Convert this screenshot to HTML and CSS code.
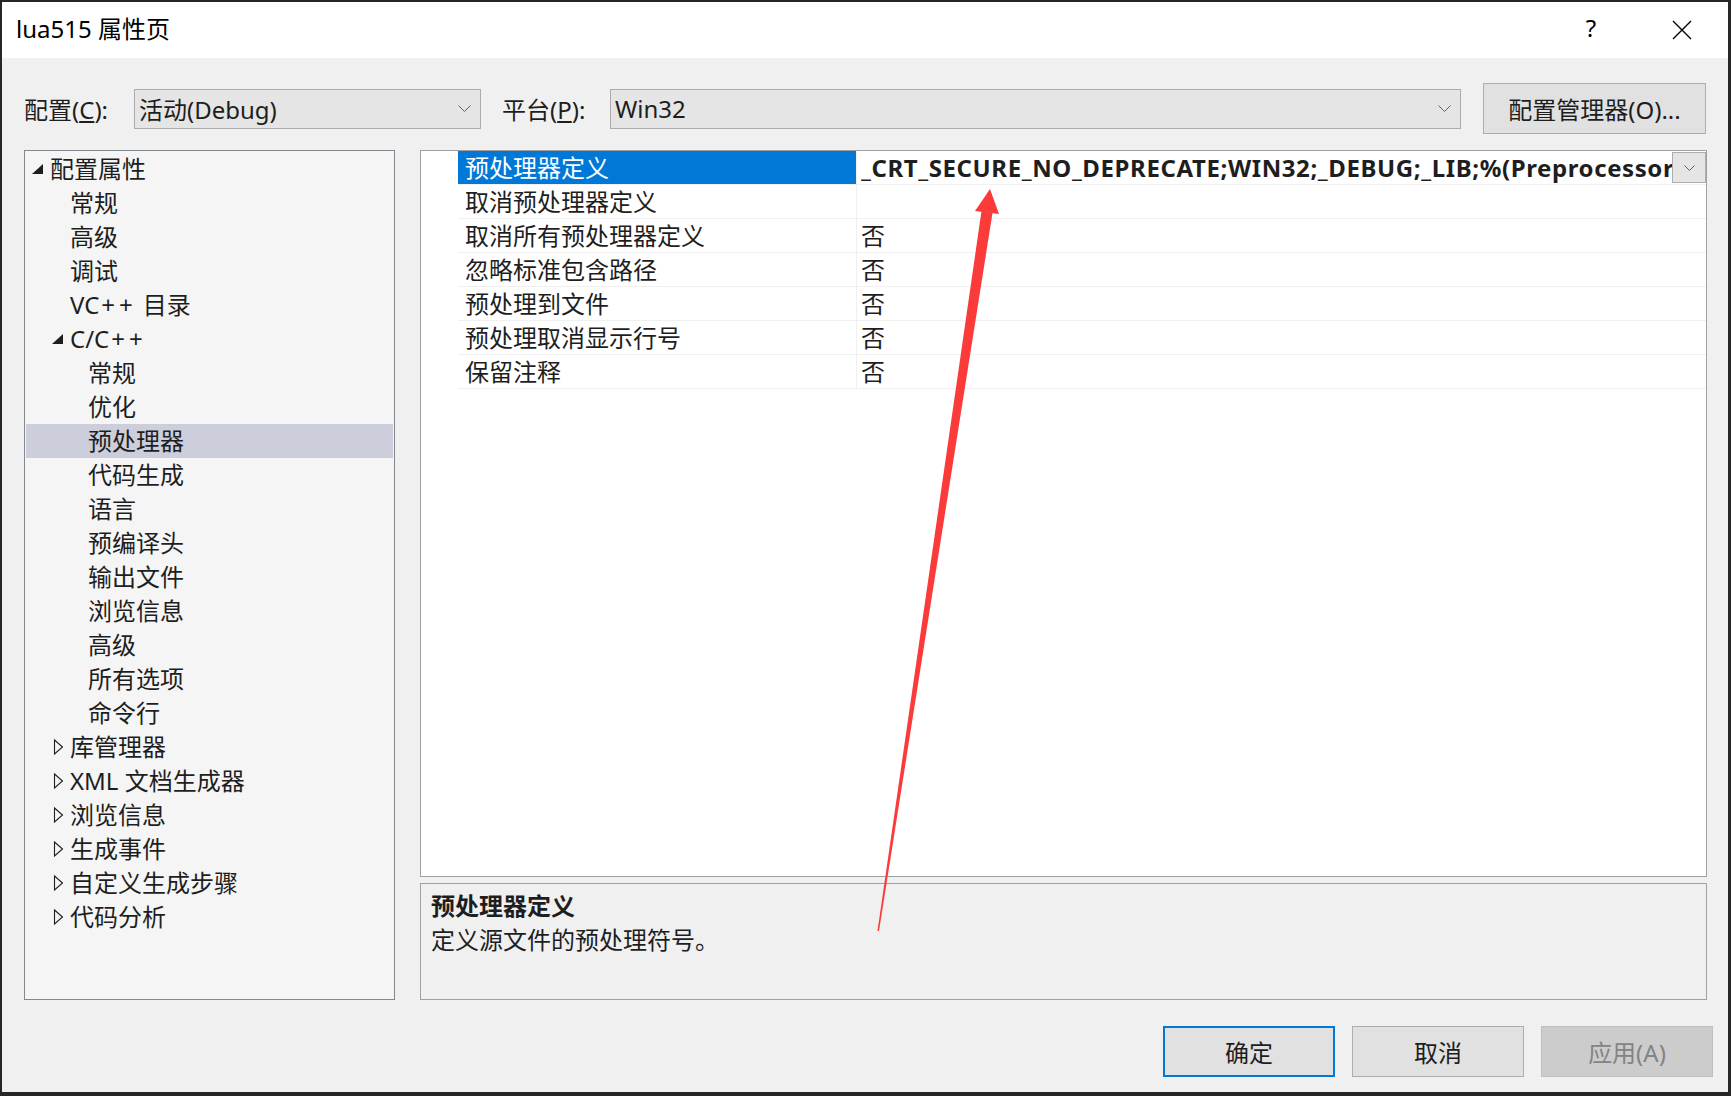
FILE: index.html
```html
<!DOCTYPE html>
<html lang="zh-CN">
<head>
    <meta charset="UTF-8">
    <title>lua515 属性页</title>
    <link rel="stylesheet" href="styles.css">
</head>
<body>
    <div class="window">
        <div class="titlebar">
            <span class="title">lua515 属性页</span>
            <span class="help">?</span>
            <span class="close">
                <svg width="20" height="20" viewBox="0 0 20 20"><path d="M1 1 L19 19 M19 1 L1 19" stroke="#000" stroke-width="1.4" fill="none"/></svg>
            </span>
        </div>

        <div class="toolbar">
            <span class="label label-config">配置(<u>C</u>):</span>
            <div class="combo combo-config">
                <span>活动(Debug)</span>
                <svg width="13" height="7" viewBox="0 0 13 7"><path d="M0.5 0.5 L6.5 6.5 L12.5 0.5" fill="none" stroke="#606060"/></svg>
            </div>
            <span class="label label-platform">平台(<u>P</u>):</span>
            <div class="combo combo-platform">
                <span>Win32</span>
                <svg width="13" height="7" viewBox="0 0 13 7"><path d="M0.5 0.5 L6.5 6.5 L12.5 0.5" fill="none" stroke="#606060"/></svg>
            </div>
            <button class="btn btn-manager">配置管理器(O)...</button>
        </div>

        <div class="main">
            <div class="tree">
                <div class="node lvl0"><span class="exp"><svg width="11" height="10" viewBox="0 0 11 10"><polygon points="11,0 11,10 0,10" fill="#1e1e1e"/></svg></span>配置属性</div>
                <div class="node lvl1"><span class="exp"></span>常规</div>
                <div class="node lvl1"><span class="exp"></span>高级</div>
                <div class="node lvl1"><span class="exp"></span>调试</div>
                <div class="node lvl1"><span class="exp"></span>VC<span class="pp wide">++</span> 目录</div>
                <div class="node lvl1"><span class="exp"><svg width="11" height="10" viewBox="0 0 11 10"><polygon points="11,0 11,10 0,10" fill="#1e1e1e"/></svg></span>C/C<span class="pp">++</span></div>
                <div class="node lvl2"><span class="exp"></span>常规</div>
                <div class="node lvl2"><span class="exp"></span>优化</div>
                <div class="node lvl2 selected"><span class="exp"></span>预处理器</div>
                <div class="node lvl2"><span class="exp"></span>代码生成</div>
                <div class="node lvl2"><span class="exp"></span>语言</div>
                <div class="node lvl2"><span class="exp"></span>预编译头</div>
                <div class="node lvl2"><span class="exp"></span>输出文件</div>
                <div class="node lvl2"><span class="exp"></span>浏览信息</div>
                <div class="node lvl2"><span class="exp"></span>高级</div>
                <div class="node lvl2"><span class="exp"></span>所有选项</div>
                <div class="node lvl2"><span class="exp"></span>命令行</div>
                <div class="node lvl1"><span class="exp closed"><svg width="11" height="16" viewBox="0 0 11 16"><polygon points="1.5,1 9.5,8 1.5,15" fill="none" stroke="#1e1e1e" stroke-width="1.1"/></svg></span>库管理器</div>
                <div class="node lvl1"><span class="exp closed"><svg width="11" height="16" viewBox="0 0 11 16"><polygon points="1.5,1 9.5,8 1.5,15" fill="none" stroke="#1e1e1e" stroke-width="1.1"/></svg></span>XML 文档生成器</div>
                <div class="node lvl1"><span class="exp closed"><svg width="11" height="16" viewBox="0 0 11 16"><polygon points="1.5,1 9.5,8 1.5,15" fill="none" stroke="#1e1e1e" stroke-width="1.1"/></svg></span>浏览信息</div>
                <div class="node lvl1"><span class="exp closed"><svg width="11" height="16" viewBox="0 0 11 16"><polygon points="1.5,1 9.5,8 1.5,15" fill="none" stroke="#1e1e1e" stroke-width="1.1"/></svg></span>生成事件</div>
                <div class="node lvl1"><span class="exp closed"><svg width="11" height="16" viewBox="0 0 11 16"><polygon points="1.5,1 9.5,8 1.5,15" fill="none" stroke="#1e1e1e" stroke-width="1.1"/></svg></span>自定义生成步骤</div>
                <div class="node lvl1"><span class="exp closed"><svg width="11" height="16" viewBox="0 0 11 16"><polygon points="1.5,1 9.5,8 1.5,15" fill="none" stroke="#1e1e1e" stroke-width="1.1"/></svg></span>代码分析</div>
            </div>

            <div class="right">
                <div class="grid">
                    <div class="prop">
                        <div class="gutter"></div>
                        <div class="name active">预处理器定义</div>
                        <div class="value">
                            <span class="value-text bold">_CRT_SECURE_NO_DEPRECATE;WIN32;_DEBUG;_LIB;%(PreprocessorDefinitions)</span>
                            <span class="drop">
                                <svg width="11" height="6" viewBox="0 0 11 6"><path d="M0.5 0.5 L5.5 5.5 L10.5 0.5" fill="none" stroke="#606060"/></svg>
                            </span>
                        </div>
                    </div>
                    <div class="prop">
                        <div class="gutter"></div>
                        <div class="name">取消预处理器定义</div>
                        <div class="value"></div>
                    </div>
                    <div class="prop">
                        <div class="gutter"></div>
                        <div class="name">取消所有预处理器定义</div>
                        <div class="value">否</div>
                    </div>
                    <div class="prop">
                        <div class="gutter"></div>
                        <div class="name">忽略标准包含路径</div>
                        <div class="value">否</div>
                    </div>
                    <div class="prop">
                        <div class="gutter"></div>
                        <div class="name">预处理到文件</div>
                        <div class="value">否</div>
                    </div>
                    <div class="prop">
                        <div class="gutter"></div>
                        <div class="name">预处理取消显示行号</div>
                        <div class="value">否</div>
                    </div>
                    <div class="prop">
                        <div class="gutter"></div>
                        <div class="name">保留注释</div>
                        <div class="value">否</div>
                    </div>
                </div>

                <div class="desc">
                    <div class="desc-title">预处理器定义</div>
                    <div>定义源文件的预处理符号。</div>
                </div>
            </div>
        </div>

        <div class="footer">
            <button class="btn btn-default">确定</button>
            <button class="btn">取消</button>
            <button class="btn btn-disabled">应用(A)</button>
        </div>
    </div>

    <svg class="arrow" width="1731" height="1096" viewBox="0 0 1731 1096">
        <polygon points="981.5,211 992.5,213 879,931 877.5,931" fill="#fb3a3a"/>
        <polygon points="990,189 975,211 999,214" fill="#fb3a3a"/>
    </svg>
</body>
</html>
```

FILE: styles.css
```css
* {
    box-sizing: border-box;
}

html, body {
    margin: 0;
}

body {
    position: relative;
    width: 1731px;
    height: 1096px;
    overflow: hidden;
    background-color: #262626;
    font-family: "Noto Sans", "Noto Sans CJK SC", sans-serif;
    font-size: 24px;
    color: #1e1e1e;
}

.window {
    margin: 2px 3px 4px 2px;
    height: 1090px;
    background-color: #f0f0f0;
    display: flex;
    flex-direction: column;
}

/* title bar */

.titlebar {
    height: 56px;
    background-color: #fff;
    display: flex;
    align-items: center;
    padding: 0 26px 5px 14px;
    color: #000;
}

.title {
    flex: 1;
}

.help {
    width: 40px;
    text-align: center;
    margin-right: 51px;
}

.close {
    width: 40px;
    display: flex;
    justify-content: center;
    padding-top: 5px;
}

/* config row */

.toolbar {
    display: flex;
    align-items: center;
    padding: 25px 0 0 22px;
    height: 76px;
}

.label {
    white-space: nowrap;
}

.label-config {
    width: 110px;
}

.label-platform {
    width: 108px;
    margin-left: 21px;
}

.combo {
    height: 40px;
    border: 1px solid #acacac;
    background-color: #e5e5e5;
    display: flex;
    align-items: center;
    justify-content: space-between;
    padding: 0 9px 0 4px;
}

.combo-config {
    width: 347px;
}

.combo-platform {
    width: 851px;
}

.btn {
    height: 51px;
    border: 1px solid #adadad;
    background-color: #e1e1e1;
    font: inherit;
    color: #1e1e1e;
    padding: 0;
}

.btn-manager {
    width: 223px;
    margin-left: 22px;
}

/* main area */

.main {
    display: flex;
    gap: 25px;
    margin-top: 16px;
    height: 850px;
    padding: 0 21px 0 22px;
}

.tree {
    width: 371px;
    flex-shrink: 0;
    border: 1px solid #828790;
    background-color: #f5f5f5;
    padding: 1px;
}

.node {
    height: 34px;
    line-height: 34px;
    display: flex;
    align-items: center;
    white-space: nowrap;
}

.node .exp {
    width: 18px;
    display: flex;
    align-items: center;
}

.node .exp.closed {
    padding-left: 1px;
}

.node .pp {
    letter-spacing: 4px;
    padding-left: 2px;
}

.node .pp.wide {
    padding-right: 6px;
}

.lvl0 {
    padding-left: 6px;
}

.lvl1 {
    padding-left: 26px;
}

.lvl2 {
    padding-left: 44px;
}

.node.selected {
    background-color: #cccedb;
}

.right {
    flex: 1;
    min-width: 0;
    display: flex;
    flex-direction: column;
    gap: 6px;
}

.grid {
    flex: 1;
    background-color: #fff;
    border: 1px solid #a0a0a0;
}

.prop {
    display: flex;
    height: 34px;
    line-height: 33px;
}

.prop .gutter {
    width: 37px;
    flex-shrink: 0;
}

.prop .name {
    width: 399px;
    flex-shrink: 0;
    padding-left: 7px;
    border-bottom: 1px solid #f0f0f0;
    border-right: 1px solid #f0f0f0;
    white-space: nowrap;
}

.prop .name.active {
    background-color: #0078d7;
    color: #fff;
}

.prop .value {
    flex: 1;
    min-width: 0;
    display: flex;
    padding-left: 4px;
    border-bottom: 1px solid #f0f0f0;
}

.value-text {
    flex: 1;
    overflow: hidden;
    white-space: nowrap;
}

.bold {
    font-weight: bold;
    letter-spacing: 0.6px;
}

.drop {
    width: 34px;
    height: 31px;
    flex-shrink: 0;
    margin-top: 1px;
    border: 1px solid #adadad;
    background-color: #e5e5e5;
    display: flex;
    align-items: center;
    justify-content: center;
}

.desc {
    height: 117px;
    border: 1px solid #a0a0a0;
    padding: 5px 10px;
    line-height: 34px;
}

.desc-title {
    font-weight: bold;
}

/* bottom buttons */

.footer {
    display: flex;
    justify-content: flex-end;
    gap: 17px;
    padding: 26px 15px 0 0;
}

.footer .btn {
    width: 172px;
}

.btn-default {
    border: 2px solid #0078d7;
}

.btn-disabled {
    background-color: #cccccc;
    border-color: #bfbfbf;
    color: #838383;
}

/* annotation */

.arrow {
    position: absolute;
    left: 0;
    top: 0;
    pointer-events: none;
}
```
